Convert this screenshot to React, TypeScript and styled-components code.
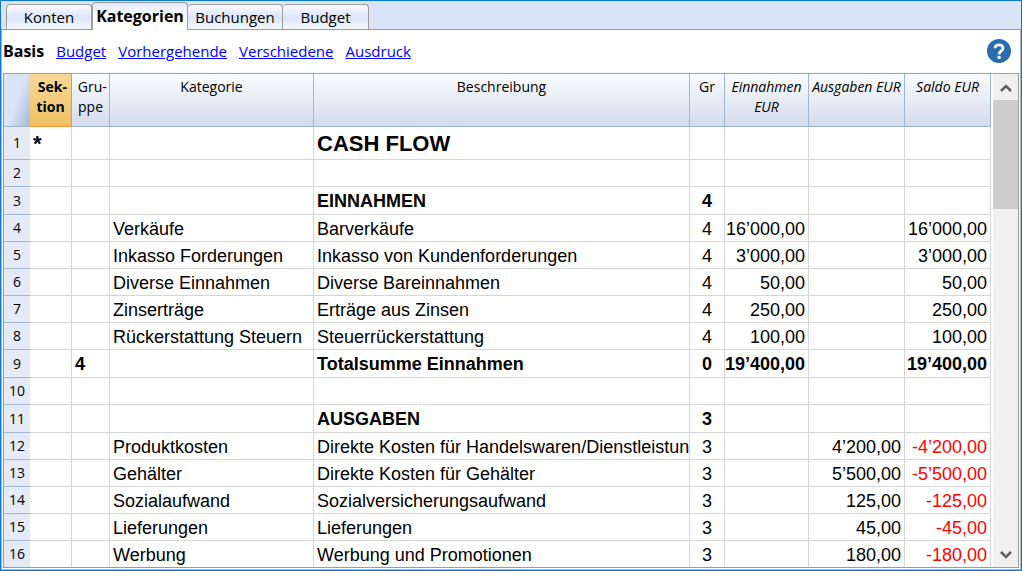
import React from "react";
import styled, { createGlobalStyle, css } from "styled-components";

const UI = `"Open Sans", "Noto Sans", sans-serif`;
const DATA = `"Liberation Sans", Arial, sans-serif`;

const GlobalStyle = createGlobalStyle`
  *, *::before, *::after { box-sizing: border-box; }
  html, body, #root { height: 100%; }
  body { margin: 0; background: #fff; color: #000; font-family: ${UI}; }
`;

const Window = styled.main`
  display: flex;
  flex-direction: column;
  min-height: 100%;
  border: 1px solid #0b78d6;
  background: #fff;
`;

const TabBar = styled.div`
  display: flex;
  align-items: flex-end;
  height: 29px;
  padding-left: 5px;
  background: #dae4f8;
  border-bottom: 1px solid #9c9c9c;
`;

const Tab = styled.button<{ $width: number }>`
  width: ${(p) => p.$width}px;
  height: 25px;
  padding: 0;
  border: 1px solid #9c9c9c;
  border-left-width: 0;
  border-bottom: 0;
  border-radius: 4px 4px 0 0;
  background: linear-gradient(#fafbff, #dbe5f9 50%, #f4f7fe);
  color: #000;
  font: 15px/24px ${UI};
  white-space: nowrap;
  &:first-child { border-left-width: 1px; }
  &[aria-selected="true"] {
    height: 28px;
    margin-bottom: -1px;
    border-left-width: 1px;
    background: linear-gradient(#e2eafb, #fff 60%);
    font-size: 16px;
    font-weight: 700;
    line-height: 27px;
  }
`;

const Panel = styled.div`
  display: flex;
  flex: 1;
  flex-direction: column;
  border: 1px solid #b4b4b4;
  border-top: 0;
`;

const ViewBar = styled.nav`
  display: flex;
  align-items: center;
  gap: 12px;
  height: 43px;
  padding: 0 9px 2px 1px;
  font-size: 15px;
`;

const Current = styled.span`
  font-size: 16px;
  font-weight: 700;
`;

const ViewLink = styled.a`
  color: #00f;
`;

const Help = styled.button`
  width: 24px;
  height: 24px;
  margin-left: auto;
  padding: 0;
  border: 0;
  background: none;
  svg { display: block; }
`;

const Grid = styled.section`
  display: flex;
  flex: 1;
  margin: 0 1px 1px;
  border: 1px solid #9c9c9c;
  overflow: hidden;
`;

const Table = styled.table`
  flex: 1;
  min-width: 0;
  width: 100%;
  table-layout: fixed;
  border-collapse: separate;
  border-spacing: 0;
`;

const HeadRow = styled.tr`
  height: 53px;
`;

const Corner = styled.td`
  padding: 0;
  background: linear-gradient(110deg, #dae4f8 50%, #a3b9d3);
  border-bottom: 1px solid #9fb6d2;
`;

const ColHead = styled.th<{ $active?: boolean; $italic?: boolean }>`
  padding: 3px 0 0;
  vertical-align: top;
  overflow: hidden;
  border-right: 1px solid #9fb6d2;
  border-bottom: 1px solid #9fb6d2;
  background: linear-gradient(#fafdfe, #e6ebf5 50%, #d3daea);
  font: 400 14px/20px ${UI};
  font-style: ${(p) => (p.$italic ? "italic" : "normal")};
  ${(p) =>
    p.$active &&
    css`
      border-color: #f29536;
      background: linear-gradient(#f7d898, #f0c062);
      font-weight: 700;
    `}
`;

const Row = styled.tr<{ $height: number }>`
  height: ${(p) => p.$height}px;
  &:last-child > * { border-bottom: 0; }
`;

const RowHead = styled.th`
  padding: 0;
  border-bottom: 1px solid #9fb6d2;
  background: #e4ebf7;
  font: 400 14px/20px ${UI};
`;

const Cell = styled.td<{ $align?: "center" | "right"; $bold?: boolean; $red?: boolean; $title?: boolean }>`
  padding: ${(p) => (p.$bold && !p.$title ? 0 : 2)}px 3px 0 ${(p) => (p.$align === "right" ? 0 : 3)}px;
  overflow: hidden;
  white-space: nowrap;
  text-align: ${(p) => p.$align || "left"};
  border-right: 1px solid #d6d6d6;
  border-bottom: 1px solid #d6d6d6;
  color: ${(p) => (p.$red ? "#f00" : "#000")};
  font: ${(p) => (p.$bold ? 700 : 400)} ${(p) => (p.$title ? 22 : 18)}px/24px ${DATA};
`;

const ScrollBar = styled.div`
  display: flex;
  flex-direction: column;
  justify-content: space-between;
  width: 25px;
  margin: 0 0 0 2px;
  background: #f0f0f0;
`;

const Thumb = styled.div`
  height: 109px;
  margin-bottom: auto;
  background: #cdcdcd;
`;

const Arrow = styled.button`
  display: flex;
  align-items: center;
  justify-content: center;
  height: 26px;
  padding: 2px 0 0;
  border: 0;
  background: none;
`;

const tabs = [
  { label: "Konten", width: 86 },
  { label: "Kategorien", width: 96, selected: true },
  { label: "Buchungen", width: 95 },
  { label: "Budget", width: 86 },
];

type Entry = {
  h?: number;
  sek?: string;
  grp?: string;
  kat?: string;
  text?: string;
  gr?: string;
  ein?: string;
  aus?: string;
  sal?: string;
  bold?: boolean;
  title?: boolean;
};

const rows: Entry[] = [
  { h: 33, sek: "*", text: "CASH FLOW", bold: true, title: true },
  {},
  { h: 28, text: "EINNAHMEN", gr: "4", bold: true },
  { kat: "Verkäufe", text: "Barverkäufe", gr: "4", ein: "16’000,00", sal: "16’000,00" },
  { kat: "Inkasso Forderungen", text: "Inkasso von Kundenforderungen", gr: "4", ein: "3’000,00", sal: "3’000,00" },
  { kat: "Diverse Einnahmen", text: "Diverse Bareinnahmen", gr: "4", ein: "50,00", sal: "50,00" },
  { kat: "Zinserträge", text: "Erträge aus Zinsen", gr: "4", ein: "250,00", sal: "250,00" },
  { kat: "Rückerstattung Steuern", text: "Steuerrückerstattung", gr: "4", ein: "100,00", sal: "100,00" },
  { h: 28, grp: "4", text: "Totalsumme Einnahmen", gr: "0", ein: "19’400,00", sal: "19’400,00", bold: true },
  {},
  { h: 28, text: "AUSGABEN", gr: "3", bold: true },
  { kat: "Produktkosten", text: "Direkte Kosten für Handelswaren/Dienstleistun", gr: "3", aus: "4’200,00", sal: "-4’200,00" },
  { kat: "Gehälter", text: "Direkte Kosten für Gehälter", gr: "3", aus: "5’500,00", sal: "-5’500,00" },
  { kat: "Sozialaufwand", text: "Sozialversicherungsaufwand", gr: "3", aus: "125,00", sal: "-125,00" },
  { kat: "Lieferungen", text: "Lieferungen", gr: "3", aus: "45,00", sal: "-45,00" },
  { h: 26, kat: "Werbung", text: "Werbung und Promotionen", gr: "3", aus: "180,00", sal: "-180,00" },
];

const columns = [26, 42, 38, 204, undefined, 35, 84, 96, 86];

export default function App() {
  return (
    <>
      <GlobalStyle />
      <Window>
        <TabBar role="tablist">
          {tabs.map((t) => (
            <Tab key={t.label} role="tab" aria-selected={!!t.selected} $width={t.width}>
              {t.label}
            </Tab>
          ))}
        </TabBar>
        <Panel>
          <ViewBar aria-label="Ansichten">
            <Current>Basis</Current>
            {["Budget", "Vorhergehende", "Verschiedene", "Ausdruck"].map((v) => (
              <ViewLink key={v} href="#">
                {v}
              </ViewLink>
            ))}
            <Help aria-label="Hilfe">
              <svg width="24" height="24" viewBox="0 0 24 24" fill="none">
                <circle cx="12" cy="12" r="12" fill="#2a6cb0" />
                <path d="M8 9.2C8 4.6 16 4.8 16 9.2c0 2.6-3.9 2.9-3.9 6" stroke="#fff" strokeWidth="2.8" />
                <rect x="10.6" y="16.8" width="3" height="3" fill="#fff" />
              </svg>
            </Help>
          </ViewBar>
          <Grid>
            <Table>
              <colgroup>
                {columns.map((w, i) => (
                  <col key={i} width={w} />
                ))}
              </colgroup>
              <thead>
                <HeadRow>
                  <Corner />
                  <ColHead scope="col" $active>&nbsp;Sek-<br />tion</ColHead>
                  <ColHead scope="col">&nbsp;Gru-<br />ppe</ColHead>
                  <ColHead scope="col">Kategorie</ColHead>
                  <ColHead scope="col">Beschreibung</ColHead>
                  <ColHead scope="col">Gr</ColHead>
                  <ColHead scope="col" $italic>Einnahmen<br />EUR</ColHead>
                  <ColHead scope="col" $italic>Ausgaben EUR</ColHead>
                  <ColHead scope="col" $italic>Saldo EUR</ColHead>
                </HeadRow>
              </thead>
              <tbody>
                {rows.map((r, i) => (
                  <Row key={i} $height={r.h || 27}>
                    <RowHead scope="row">{i + 1}</RowHead>
                    <Cell $bold={r.bold} $title={r.title}>{r.sek}</Cell>
                    <Cell $bold={r.bold}>{r.grp}</Cell>
                    <Cell>{r.kat}</Cell>
                    <Cell $bold={r.bold} $title={r.title}>{r.text}</Cell>
                    <Cell $align="center" $bold={r.bold}>{r.gr}</Cell>
                    <Cell $align="right" $bold={r.bold}>{r.ein}</Cell>
                    <Cell $align="right" $bold={r.bold}>{r.aus}</Cell>
                    <Cell $align="right" $bold={r.bold} $red={r.sal?.startsWith("-")}>{r.sal}</Cell>
                  </Row>
                ))}
              </tbody>
            </Table>
            <ScrollBar>
              <Arrow aria-label="Nach oben">
                <svg width="12" height="10" viewBox="0 0 12 10" fill="none" stroke="#606060" strokeWidth="2.6">
                  <path d="M1 8l5-5 5 5" />
                </svg>
              </Arrow>
              <Thumb />
              <Arrow aria-label="Nach unten">
                <svg width="12" height="10" viewBox="0 0 12 10" fill="none" stroke="#606060" strokeWidth="2.6">
                  <path d="M1 2l5 5 5-5" />
                </svg>
              </Arrow>
            </ScrollBar>
          </Grid>
        </Panel>
      </Window>
    </>
  );
}
